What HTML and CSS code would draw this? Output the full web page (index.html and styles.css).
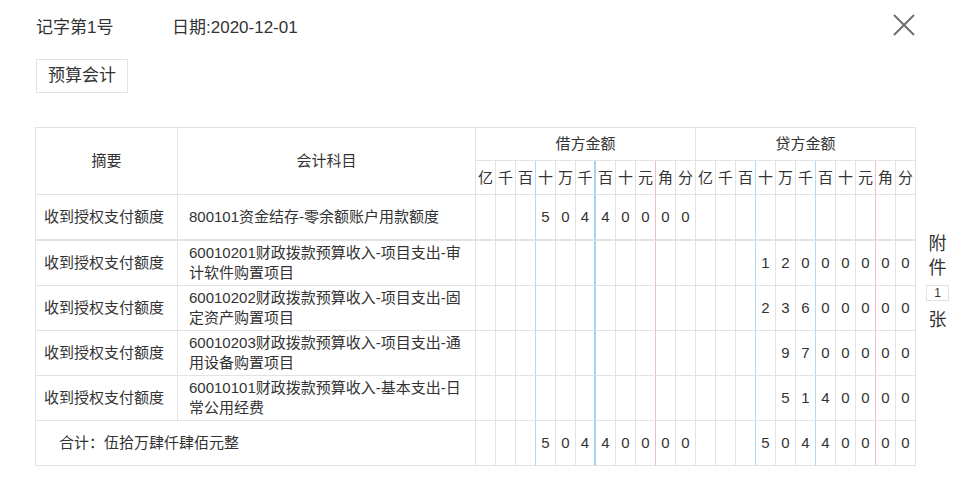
FILE: index.html
```html
<!DOCTYPE html>
<html lang="zh-CN">
<head>
<meta charset="utf-8">
<title>记账凭证</title>
<link rel="stylesheet" href="styles.css">
</head>
<body>
<div class="page">
  <div class="head">
    <span class="no">记字第1号</span>
    <span class="date">日期:2020-12-01</span>
  </div>
  <svg class="close" width="24" height="24" viewBox="0 0 24 24"><path d="M2 2 L22 22 M22 2 L2 22" stroke="#6f6f6f" stroke-width="2" fill="none"/></svg>
  <div class="tag">预算会计</div>
  <div class="main">
    <table class="grid">
      <colgroup>
        <col class="c-sum"><col class="c-acct">
        <col class="c-d"><col class="c-d"><col class="c-d"><col class="c-d"><col class="c-d"><col class="c-d"><col class="c-d"><col class="c-d"><col class="c-d"><col class="c-d"><col class="c-d">
        <col class="c-d"><col class="c-d"><col class="c-d"><col class="c-d"><col class="c-d"><col class="c-d"><col class="c-d"><col class="c-d"><col class="c-d"><col class="c-d"><col class="c-d">
      </colgroup>
      <tr class="h1">
        <td rowspan="2" class="hc">摘要</td>
        <td rowspan="2" class="hc">会计科目</td>
        <td colspan="11" class="hc">借方金额</td>
        <td colspan="11" class="hc">贷方金额</td>
      </tr>
      <tr class="h2">
        <td>亿</td><td>千</td><td class="b">百</td><td>十</td><td>万</td><td class="bb">千</td><td>百</td><td>十</td><td class="r">元</td><td>角</td><td>分</td>
        <td>亿</td><td>千</td><td class="b">百</td><td>十</td><td>万</td><td class="b">千</td><td>百</td><td>十</td><td class="r">元</td><td>角</td><td>分</td>
      </tr>
      <tr class="row first">
        <td class="sum">收到授权支付额度</td>
        <td class="acct">800101资金结存-零余额账户用款额度</td>
        <td></td><td></td><td class="b"></td><td>5</td><td>0</td><td class="bb">4</td><td>4</td><td>0</td><td class="r">0</td><td>0</td><td>0</td>
        <td></td><td></td><td class="b"></td><td></td><td></td><td class="b"></td><td></td><td></td><td class="r"></td><td></td><td></td>
      </tr>
      <tr class="row">
        <td class="sum">收到授权支付额度</td>
        <td class="acct">60010201财政拨款预算收入-项目支出-审计软件购置项目</td>
        <td></td><td></td><td class="b"></td><td></td><td></td><td class="bb"></td><td></td><td></td><td class="r"></td><td></td><td></td>
        <td></td><td></td><td class="b"></td><td>1</td><td>2</td><td class="b">0</td><td>0</td><td>0</td><td class="r">0</td><td>0</td><td>0</td>
      </tr>
      <tr class="row">
        <td class="sum">收到授权支付额度</td>
        <td class="acct">60010202财政拨款预算收入-项目支出-固定资产购置项目</td>
        <td></td><td></td><td class="b"></td><td></td><td></td><td class="bb"></td><td></td><td></td><td class="r"></td><td></td><td></td>
        <td></td><td></td><td class="b"></td><td>2</td><td>3</td><td class="b">6</td><td>0</td><td>0</td><td class="r">0</td><td>0</td><td>0</td>
      </tr>
      <tr class="row">
        <td class="sum">收到授权支付额度</td>
        <td class="acct">60010203财政拨款预算收入-项目支出-通用设备购置项目</td>
        <td></td><td></td><td class="b"></td><td></td><td></td><td class="bb"></td><td></td><td></td><td class="r"></td><td></td><td></td>
        <td></td><td></td><td class="b"></td><td></td><td>9</td><td class="b">7</td><td>0</td><td>0</td><td class="r">0</td><td>0</td><td>0</td>
      </tr>
      <tr class="row">
        <td class="sum">收到授权支付额度</td>
        <td class="acct">60010101财政拨款预算收入-基本支出-日常公用经费</td>
        <td></td><td></td><td class="b"></td><td></td><td></td><td class="bb"></td><td></td><td></td><td class="r"></td><td></td><td></td>
        <td></td><td></td><td class="b"></td><td></td><td>5</td><td class="b">1</td><td>4</td><td>0</td><td class="r">0</td><td>0</td><td>0</td>
      </tr>
      <tr class="row total">
        <td colspan="2" class="tot">合计：伍拾万肆仟肆佰元整</td>
        <td></td><td></td><td class="b"></td><td>5</td><td>0</td><td class="bb">4</td><td>4</td><td>0</td><td class="r">0</td><td>0</td><td>0</td>
        <td></td><td></td><td class="b"></td><td>5</td><td>0</td><td class="b">4</td><td>4</td><td>0</td><td class="r">0</td><td>0</td><td>0</td>
      </tr>
    </table>
    <div class="side">
      <span class="sc">附</span>
      <span class="sc">件</span>
      <span class="cnt">1</span>
      <span class="sc zhang">张</span>
    </div>
  </div>
</div>
</body>
</html>
```

FILE: styles.css
```css
html, body {
  margin: 0;
  padding: 0;
  background: #fff;
}
body {
  font-family: "Liberation Sans", "Noto Sans CJK SC", sans-serif;
  color: #333;
}
.page {
  position: relative;
  padding: 14px 0 0 35px;
  width: 924px;
}
.head {
  display: flex;
  align-items: center;
  height: 28px;
  margin-left: 1px;
  font-size: 17px;
  line-height: 28px;
}
.no {
  width: 136px;
}
.close {
  position: absolute;
  left: 892px;
  top: 13px;
}
.tag {
  display: inline-block;
  box-sizing: border-box;
  margin: 17px 0 0 1px;
  height: 34px;
  padding: 0 11px;
  border: 1px solid #e2e2e2;
  font-size: 17px;
  line-height: 32px;
}
.main {
  display: flex;
  margin-top: 34px;
}
.grid {
  table-layout: fixed;
  width: 880px;
  border-collapse: separate;
  border-spacing: 0;
  border-top: 1px solid #e3e3e3;
  border-left: 1px solid #e3e3e3;
  font-size: 15px;
  flex: none;
}
.c-sum { width: 142px; }
.c-acct { width: 298px; }
.c-d { width: 20px; }
.grid td {
  border-right: 1px solid #e3e3e3;
  border-bottom: 1px solid #e3e3e3;
  padding: 0;
  text-align: center;
  vertical-align: middle;
  line-height: 20px;
  box-sizing: border-box;
}
.grid td.b { border-right-color: #b3daf5; }
.grid td.bb { border-right: 2px solid #a6d3f3; }
.grid td.r { border-right-color: #efbfc2; }
.h1 { height: 33px; }
.h2 { height: 34px; }
.h1 td.hc { line-height: 20px; }
.row { height: 45px; }
.row.first { height: 46px; }
.row.first td { border-bottom-width: 2px; }
.grid td.sum {
  text-align: left;
  padding-left: 8px;
  white-space: nowrap;
}
.grid td.acct {
  text-align: left;
  padding: 0 10px 0 11px;
  word-break: break-all;
}
.grid td.tot {
  text-align: left;
  padding-left: 23px;
}
.side {
  width: 44px;
  display: flex;
  flex-direction: column;
  align-items: center;
  padding-top: 105px;
  font-size: 18px;
}
.sc {
  line-height: 24px;
}
.cnt {
  box-sizing: border-box;
  width: 23px;
  height: 16px;
  margin: 5px 0 7px;
  border: 1px solid #e2e2e2;
  font-size: 12px;
  line-height: 14px;
  text-align: center;
}
```
